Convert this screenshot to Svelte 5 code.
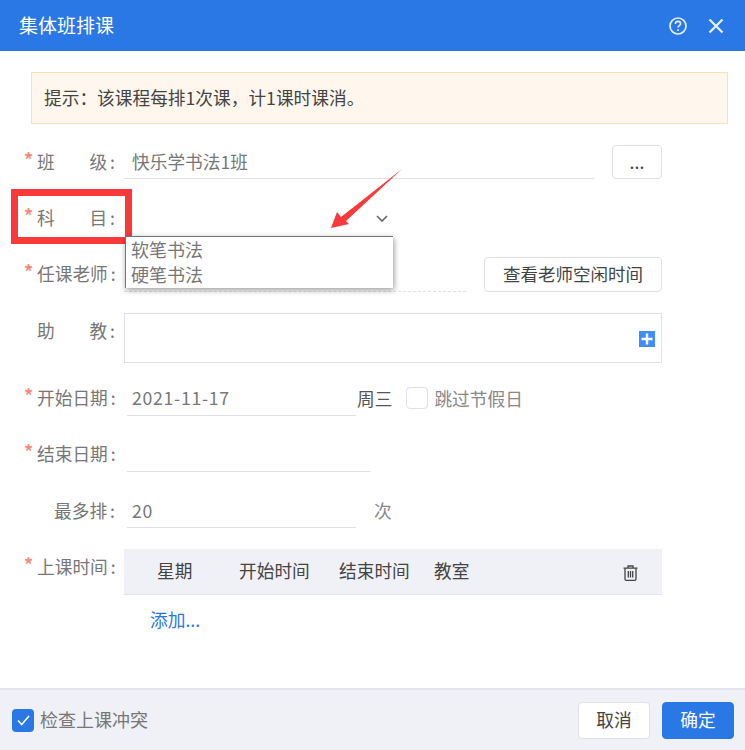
<script>
  const days = ["星期", "开始时间", "结束时间", "教室"];
  const subjects = ["软笔书法", "硬笔书法"];
</script>

<div class="dialog">
  <header class="title">
    <span class="title-text">集体班排课</span>
    <div class="title-icons">
      <svg width="20" height="20" viewBox="0 0 20 20" fill="none" stroke="#e4eefc">
        <circle cx="10" cy="10" r="8" stroke-width="1.7" />
        <path d="M7.4 8c0-1.6 1.1-2.6 2.6-2.6s2.6 1 2.6 2.3c0 1.9-2.6 1.9-2.6 3.9" stroke-width="1.6" />
        <path d="M10 13.2v1.7" stroke-width="1.7" />
      </svg>
      <svg width="16" height="16" viewBox="0 0 16 16" fill="none" stroke="#e4eefc" stroke-width="2.3">
        <path d="M1.5 1.5l13 13M14.5 1.5l-13 13" />
      </svg>
    </div>
  </header>

  <main class="body">
    <div class="notice">提示：该课程每排1次课，计1课时课消。</div>

    <div class="form">
      <div class="row">
        <label class="label req"><i>班</i><i>级<b>:</b></i></label>
        <div class="field line wide">快乐学书法1班</div>
        <button class="btn dots">...</button>
      </div>

      <div class="row">
        <label class="label req"><i>科</i><i>目<b>:</b></i></label>
        <div class="select">
          <svg class="chevron" width="12" height="8" viewBox="0 0 12 8" fill="none" stroke="#666" stroke-width="1.6">
            <path d="M1 1l5 5 5-5" />
          </svg>
          <ul class="options">
            {#each subjects as s}
              <li>{s}</li>
            {/each}
          </ul>
        </div>
      </div>

      <div class="row teacher">
        <label class="label req"><i>任课老师<b>:</b></i></label>
        <div class="field dashed"></div>
        <button class="btn free">查看老师空闲时间</button>
      </div>

      <div class="row assist">
        <label class="label"><i>助</i><i>教<b>:</b></i></label>
        <div class="textarea">
          <svg class="plus" width="16" height="16" viewBox="0 0 16 16">
            <rect width="16" height="16" fill="#3d8ff5" />
            <path d="M8 2.5v11M2.5 8h11" stroke="#fff" stroke-width="2.4" />
          </svg>
        </div>
      </div>

      <div class="row start">
        <label class="label req"><i>开始日期<b>:</b></i></label>
        <div class="field line date num">2021-11-17</div>
        <span class="week">周三</span>
        <span class="box"></span>
        <span class="skip">跳过节假日</span>
      </div>

      <div class="row finish">
        <label class="label req"><i>结束日期<b>:</b></i></label>
        <div class="field line end"></div>
      </div>

      <div class="row">
        <label class="label right"><i>最多排<b>:</b></i></label>
        <div class="field line date num">20</div>
        <span class="times">次</span>
      </div>

      <div class="row schedule">
        <label class="label req"><i>上课时间<b>:</b></i></label>
        <div class="table">
          <div class="thead">
            <span class="c1">{days[0]}</span>
            <span class="c2">{days[1]}</span>
            <span class="c3">{days[2]}</span>
            <span class="c4">{days[3]}</span>
            <svg class="trash" width="15" height="16" viewBox="0 0 15 16" fill="none" stroke="#444" stroke-width="1.3">
              <path d="M0.5 3.2h14M5 3V1h5v2" />
              <path d="M2 3.2V14a1.3 1.3 0 0 0 1.3 1.3h8.4A1.3 1.3 0 0 0 13 14V3.2" />
              <path d="M5.3 6v6.5M7.5 6v6.5M9.7 6v6.5" />
            </svg>
          </div>
          <a class="add" href="#add">添加...</a>
        </div>
      </div>
    </div>
  </main>

  <footer class="foot">
    <span class="check">
      <svg width="13" height="11" viewBox="0 0 13 11" fill="none" stroke="#fff" stroke-width="1.6">
        <path d="M1 5.5l3.7 4L12 1" />
      </svg>
    </span>
    <span class="check-text">检查上课冲突</span>
    <button class="btn cancel">取消</button>
    <button class="btn ok">确定</button>
  </footer>

  <!-- annotations drawn over the screenshot -->
  <div class="mark"></div>
  <svg class="arrow" width="74" height="62" viewBox="0 0 74 62">
    <polygon points="1,60 7,44 11,49 72,1 16,53 19,56" fill="#f93a3a" />
  </svg>
</div>

<style>
  :global(body) {
    margin: 0;
    background: #fff;
  }

  .dialog {
    position: relative;
    width: 745px;
    height: 750px;
    display: flex;
    flex-direction: column;
    overflow: hidden;
    font-family: "Noto Sans CJK SC", "Liberation Sans", sans-serif;
    font-size: 17.7px;
    color: #777;
  }

  .title {
    height: 51px;
    flex: none;
    display: flex;
    align-items: center;
    justify-content: space-between;
    padding: 0 21px 0 19px;
    background: #2a78e6;
    color: #fff;
    font-size: 19px;
    box-sizing: border-box;
  }

  .title-text {
    padding-bottom: 2px;
  }

  .title-icons {
    display: flex;
    align-items: center;
    gap: 20px;
  }

  .body {
    flex: 1;
    padding: 21px 17px 0 31px;
  }

  .notice {
    height: 52px;
    box-sizing: border-box;
    display: flex;
    align-items: center;
    padding: 0 0 2px 12px;
    background: #fff7ee;
    border: 1px solid #fae0b5;
    color: #444;
  }

  .form {
    margin: 21px 52px 0 -7px;
    display: flex;
    flex-direction: column;
    gap: 22px;
  }

  .row {
    display: flex;
    align-items: flex-start;
    height: 34px;
  }

  .label {
    width: 100px;
    flex: none;
    box-sizing: border-box;
    padding: 0 9px 0 13px;
    display: flex;
    justify-content: space-between;
    position: relative;
    white-space: nowrap;
    line-height: 32px;
  }

  .label i {
    font-style: normal;
  }

  .label b {
    font-weight: 400;
    margin-left: 3px;
  }

  .label.req::before {
    content: "*";
    position: absolute;
    left: 0;
    top: -2px;
    color: #fa8a7c;
    font-size: 18px;
    font-weight: 700;
  }

  .label.right {
    justify-content: flex-end;
  }

  .field {
    height: 34px;
    box-sizing: border-box;
    line-height: 32px;
  }

  .line {
    border-bottom: 1px solid #dfe0e8;
    padding-left: 8px;
  }

  .wide {
    width: 470px;
  }

  .date {
    width: 229px;
    margin-left: 3px;
    padding-left: 5px;
  }

  .num {
    letter-spacing: 0.7px;
  }

  .end {
    width: 244px;
    margin-left: 3px;
  }

  .dashed {
    width: 342px;
    height: 35px;
    border-bottom: 1px dashed #dfe0e8;
  }

  .btn {
    box-sizing: border-box;
    border: 1px solid #dfe0e8;
    border-radius: 4px;
    background: #fff;
    color: #444;
    font: inherit;
    padding: 0 0 2px;
  }

  .dots {
    width: 50px;
    height: 34px;
    margin-left: 18px;
  }

  .select {
    position: relative;
    width: 270px;
    height: 34px;
  }

  .chevron {
    position: absolute;
    left: 252px;
    top: 14px;
  }

  .options {
    position: absolute;
    left: 1px;
    top: 35px;
    width: 268px;
    height: 52px;
    margin: 0;
    padding: 0 0 0 5px;
    box-sizing: border-box;
    list-style: none;
    background: #fff;
    border-top: 1px solid #777;
    border-left: 1px solid #777;
    box-shadow: 1px 2px 6px rgba(0, 0, 0, 0.4);
    font-size: 18px;
    line-height: 25px;
    z-index: 2;
  }

  .teacher {
    height: 35px;
  }

  .free {
    width: 178px;
    height: 35px;
    margin-left: 18px;
    font-size: 17.5px;
  }

  .assist {
    height: 50px;
    margin-top: -1px;
  }

  .assist .label {
    margin-top: 1px;
  }

  .textarea {
    position: relative;
    width: 538px;
    height: 50px;
    box-sizing: border-box;
    border: 1px solid #dfe0e8;
  }

  .plus {
    position: absolute;
    right: 6px;
    bottom: 15px;
  }

  .start {
    height: 35px;
    margin-top: -4px;
  }

  .start .field {
    height: 35px;
  }

  .week {
    margin-left: 1px;
    color: #555;
    line-height: 34px;
  }

  .box {
    width: 22px;
    height: 22px;
    box-sizing: border-box;
    margin: 6px 0 0 14px;
    border: 1px solid #dfe0e8;
    border-radius: 4px;
  }

  .skip {
    margin-left: 6px;
    color: #888;
    line-height: 34px;
  }

  .finish .label {
    line-height: 30px;
  }

  .times {
    margin-left: 18px;
    color: #888;
    line-height: 32px;
  }

  .schedule {
    height: auto;
    margin-top: -1px;
  }

  .schedule .label {
    margin-top: 1px;
  }

  .table {
    width: 538px;
  }

  .thead {
    position: relative;
    height: 46px;
    box-sizing: border-box;
    background: #f0f1f6;
    border-bottom: 1px solid #e3e5ec;
    color: #444;
    line-height: 43px;
  }

  .thead span {
    position: absolute;
    top: 0;
  }

  .c1 { left: 33px; }
  .c2 { left: 115px; }
  .c3 { left: 215px; }
  .c4 { left: 310px; }

  .trash {
    position: absolute;
    left: 499px;
    top: 16px;
  }

  .add {
    display: block;
    margin: 11px 0 0 26px;
    color: #2a78e6;
    text-decoration: none;
  }

  .foot {
    height: 62px;
    flex: none;
    box-sizing: border-box;
    display: flex;
    align-items: center;
    padding: 0 11px 0 12px;
    background: #f0f1f6;
    border-top: 2px solid #e3e5ec;
  }

  .check {
    width: 22px;
    height: 23px;
    display: flex;
    align-items: center;
    justify-content: center;
    border-radius: 4px;
    background: #2a78e6;
  }

  .check-text {
    margin-left: 6px;
    flex: 1;
    font-size: 18px;
    padding-bottom: 2px;
  }

  .cancel,
  .ok {
    width: 72px;
    height: 37px;
  }

  .ok {
    margin-left: 12px;
    background: #2a78e6;
    border-color: #2a78e6;
    color: #fff;
  }

  .mark {
    position: absolute;
    left: 11px;
    top: 189px;
    width: 121px;
    height: 55px;
    box-sizing: border-box;
    border: 7px solid #f93a3a;
  }

  .arrow {
    position: absolute;
    left: 330px;
    top: 168px;
  }
</style>
